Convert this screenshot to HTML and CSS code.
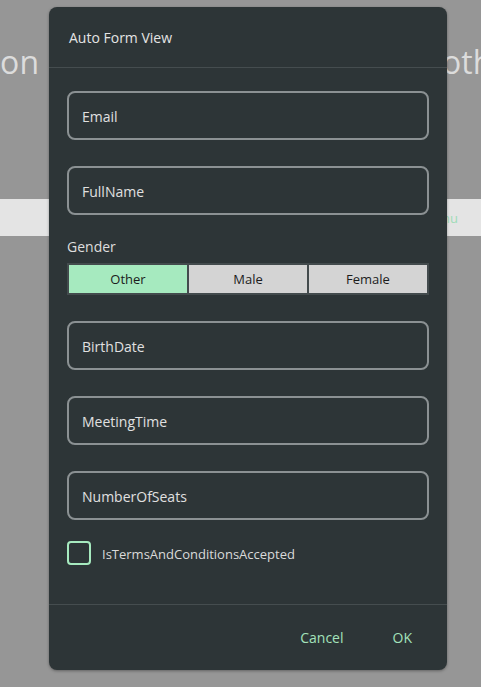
FILE: index.html
```html
<!DOCTYPE html>
<html>
<head>
<meta charset="utf-8">
<link rel="stylesheet" href="styles.css">
</head>
<body>
<div class="page">
  <div class="title-row">
    <span class="title-left">on</span>
    <span class="title-right">oth</span>
  </div>
  <div class="bar"><span class="bar-text">Menu</span></div>
</div>

<div class="dialog">
  <div class="dialog-header">Auto Form View</div>
  <div class="dialog-body">
    <div class="input"><span>Email</span></div>
    <div class="input"><span>FullName</span></div>
    <div class="field">
      <div class="label">Gender</div>
      <div class="segments">
        <div class="seg seg-on">Other</div>
        <div class="seg">Male</div>
        <div class="seg">Female</div>
      </div>
    </div>
    <div class="input"><span>BirthDate</span></div>
    <div class="input"><span>MeetingTime</span></div>
    <div class="input"><span>NumberOfSeats</span></div>
    <div class="check-row">
      <div class="checkbox"></div>
      <span class="check-label">IsTermsAndConditionsAccepted</span>
    </div>
  </div>
  <div class="dialog-footer">
    <span class="btn">Cancel</span>
    <span class="btn">OK</span>
  </div>
</div>
</body>
</html>
```

FILE: styles.css
```css
html, body {
  margin: 0;
  padding: 0;
}
body {
  background: #969696;
  font-family: "Open Sans", "Noto Sans", sans-serif;
  width: 481px;
  height: 687px;
  overflow: hidden;
  position: relative;
}
.page {
  padding-top: 40px;
}
.title-row {
  display: flex;
  white-space: nowrap;
  font-size: 32px;
  line-height: 44px;
  color: #dcdcdc;
  overflow: hidden;
}
.title-left {
  width: 38px;
  letter-spacing: 0.3px;
}
.title-right {
  margin-left: 404px;
}
.bar {
  margin-top: 115px;
  height: 37px;
  background: #e4e4e4;
  display: flex;
  align-items: center;
}
.bar-text {
  margin-left: 423px;
  font-size: 13px;
  color: #9fdcb8;
}
.dialog {
  position: absolute;
  left: 49px;
  top: 7px;
  width: 398px;
  height: 663px;
  background: #2d3537;
  border-radius: 8px;
  box-shadow: 0 1px 3px rgba(0,0,0,0.35);
  display: flex;
  flex-direction: column;
}
.dialog-header {
  height: 60px;
  padding-left: 20px;
  display: flex;
  align-items: center;
  font-size: 14px;
  color: #e4e4e4;
  border-bottom: 1px solid #454d4f;
}
.dialog-body {
  flex: 1;
  padding: 23px 18px 0 18px;
  display: flex;
  flex-direction: column;
}
.input {
  height: 49px;
  box-sizing: border-box;
  border: 2px solid #8b9193;
  border-radius: 8px;
  padding-left: 13px;
  padding-top: 2px;
  display: flex;
  align-items: center;
  font-size: 14px;
  color: #e0e0e0;
  margin-bottom: 26px;
}
.field {
  margin-top: -4px;
  margin-bottom: 26px;
}
.label {
  font-size: 14px;
  line-height: 20px;
  color: #dedede;
  margin-bottom: 6px;
}
.segments {
  display: grid;
  grid-template-columns: 1fr 1fr 1fr;
  gap: 2px;
  padding: 2px;
  background: #434b4d;
  height: 32px;
  box-sizing: border-box;
}
.seg {
  background: #d4d4d4;
  color: #1c1c1c;
  font-size: 13px;
  display: flex;
  align-items: center;
  justify-content: center;
}
.seg-on {
  background: #a6eabf;
}
.check-row {
  margin-top: -5px;
  display: flex;
  align-items: center;
  gap: 11px;
}
.checkbox {
  width: 24px;
  height: 24px;
  box-sizing: border-box;
  border: 2px solid #a6eabf;
  border-radius: 4px;
}
.check-label {
  font-size: 13px;
  color: #dadada;
  padding-top: 2px;
}
.dialog-footer {
  height: 65px;
  border-top: 1px solid #454d4f;
  display: flex;
  align-items: center;
  justify-content: flex-end;
  padding-right: 19px;
  gap: 17px;
}
.btn {
  font-size: 14px;
  color: #a3e2bb;
  padding: 0 16px;
}
```
